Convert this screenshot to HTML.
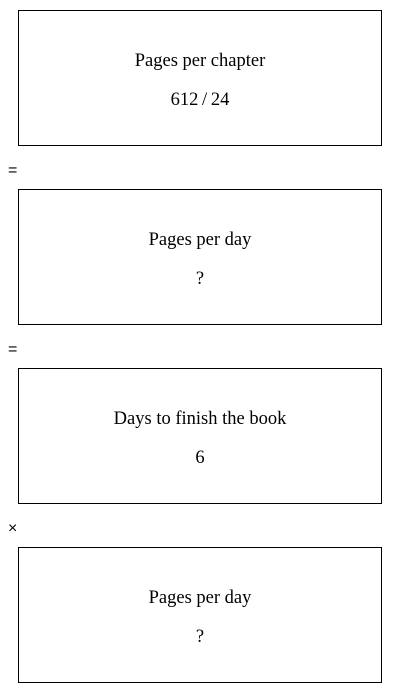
<!DOCTYPE html>
<html><head><style>
html,body{margin:0;padding:0;background:#fff;width:400px;height:693px;overflow:hidden}
body{font-family:"Liberation Serif",serif;color:#000;position:relative}
.b{position:absolute;left:18px;width:362px;height:134px;border:1px solid #000}
.t{position:absolute;left:0;right:0;text-align:center;font-size:18.5px;line-height:20px}
.op{position:absolute;left:8px;font-family:"Liberation Sans",sans-serif;font-size:16px;line-height:16px}
</style></head><body>
<div class="b" style="top:10px"><div class="t" style="top:40px">Pages per chapter</div><div class="t" style="top:79px">612&#8201;/&#8201;24</div></div>
<div class="op" style="top:163px">=</div>
<div class="b" style="top:189px"><div class="t" style="top:40px">Pages per day</div><div class="t" style="top:79px">?</div></div>
<div class="op" style="top:342px">=</div>
<div class="b" style="top:368px"><div class="t" style="top:40px">Days to finish the book</div><div class="t" style="top:79px">6</div></div>
<div class="op" style="top:521px">×</div>
<div class="b" style="top:547px"><div class="t" style="top:40px">Pages per day</div><div class="t" style="top:79px">?</div></div>
</body></html>
